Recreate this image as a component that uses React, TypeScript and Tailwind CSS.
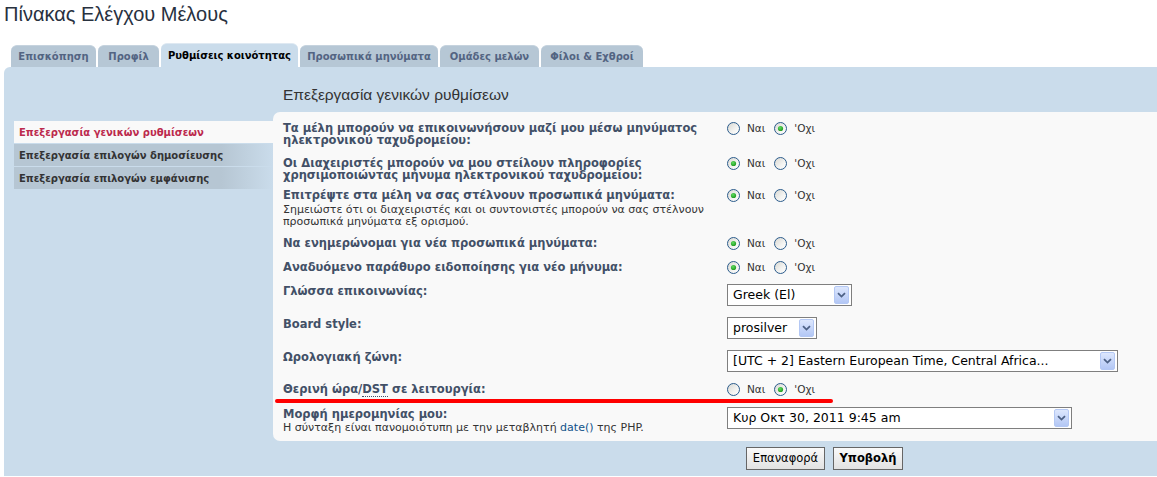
import React from "react";

const tabs = [
  { label: "Επισκόπηση", w: "w-[85px]" },
  { label: "Προφίλ", w: "w-[61px]" },
  { label: "Ρυθμίσεις κοινότητας", w: "w-[137px]", active: true },
  { label: "Προσωπικά μηνύματα", w: "w-[138px]" },
  { label: "Ομάδες μελών", w: "w-[99px]" },
  { label: "Φίλοι & Εχθροί", w: "w-[102px]" },
];

const menu = [
  { label: "Επεξεργασία γενικών ρυθμίσεων", active: true },
  { label: "Επεξεργασία επιλογών δημοσίευσης" },
  { label: "Επεξεργασία επιλογών εμφάνισης" },
];

const Radio = ({ checked }: { checked?: boolean }) => (
  <svg width="13" height="13" viewBox="0 0 13 13" className="block shrink-0">
    <defs>
      <linearGradient id="rbg" x1="0" y1="0" x2="1" y2="1">
        <stop offset="0" stopColor="#d6d6d0" />
        <stop offset="0.6" stopColor="#f4f4f2" />
        <stop offset="1" stopColor="#ffffff" />
      </linearGradient>
      <radialGradient id="rdot" cx="0.4" cy="0.35" r="0.7">
        <stop offset="0" stopColor="#5fdc5f" />
        <stop offset="1" stopColor="#1c961c" />
      </radialGradient>
    </defs>
    <circle cx="6.5" cy="6.5" r="6" fill="url(#rbg)" stroke="#2c5c8c" strokeWidth="1" />
    {checked && <circle cx="6.5" cy="6.5" r="2.6" fill="url(#rdot)" />}
  </svg>
);

const YesNo = ({ yes }: { yes: boolean }) => (
  <div className="flex h-[13px] items-center text-[10.5px] leading-[13px] text-[#333]">
    <Radio checked={yes} />
    <span className="ml-[7px]">Ναι</span>
    <span className="ml-[9px]">
      <Radio checked={!yes} />
    </span>
    <span className="ml-[7px]">'Οχι</span>
  </div>
);

const Select = ({ text, w }: { text: string; w: string }) => (
  <div
    className={`-mt-[1px] flex h-[22px] items-center justify-between border border-[#7f7f7f] bg-white pl-[5px] pr-[2px] text-[12.5px] leading-[20px] text-black ${w}`}
  >
    <span className="whitespace-nowrap">{text}</span>
    <span className="flex h-[18px] w-[15px] shrink-0 items-center justify-center rounded-[2px] border border-[#b4c8f4] bg-linear-to-b from-[#dde7fd] to-[#b3c7f5]">
      <svg width="9" height="6" viewBox="0 0 9 6">
        <path d="M1 1.2 L4.5 4.6 L8 1.2" fill="none" stroke="#4d6185" strokeWidth="1.8" />
      </svg>
    </span>
  </div>
);

const Label = ({ children }: { children: React.ReactNode }) => (
  <div className="text-[11.5px] font-bold leading-[12px] text-[#425067]">{children}</div>
);

const Desc = ({ children }: { children: React.ReactNode }) => (
  <div className="text-[11px] leading-[12px] text-[#333]">{children}</div>
);

export default function App() {
  return (
    <div className="h-[477px] w-[1157px] overflow-hidden bg-white font-['DejaVu_Sans',Verdana,sans-serif] text-[#333]">
      <h1 className="h-[28px] pl-[4px] font-['Liberation_Sans',Arial,sans-serif] text-[20px] font-normal leading-[28px] text-[#28313f]">
        Πίνακας Ελέγχου Μέλους
      </h1>

      {/* tabs */}
      <div className="flex h-[39px] items-end gap-[2px] pl-[11px]">
        {tabs.map((t) =>
          t.active ? (
            <div
              key={t.label}
              className={`flex h-[24px] items-center justify-center rounded-t-[6px] border-t border-[#dfe9f2] bg-[#cadceb] text-[10px] font-bold text-black ${t.w}`}
            >
              {t.label}
            </div>
          ) : (
            <div
              key={t.label}
              className={`flex h-[22px] items-center justify-center rounded-t-[6px] border-t border-[#c6d3de] bg-[#b6c7d5] text-[10px] font-bold text-[#536482] ${t.w}`}
            >
              {t.label}
            </div>
          )
        )}
      </div>

      {/* main panel */}
      <div className="ml-[4px] flex h-[409px] rounded-tl-[6px] bg-[#cadceb]">
        {/* left menu */}
        <div className="flex w-[269px] shrink-0 flex-col gap-[1px] pl-[10px] pt-[54px]">
          {menu.map((m) =>
            m.active ? (
              <div
                key={m.label}
                className="flex h-[22px] items-center bg-[#f9f9f9] pl-[5px] text-[10px] font-bold text-[#bc2a4d]"
              >
                {m.label}
              </div>
            ) : (
              <div
                key={m.label}
                className="flex h-[22px] items-center bg-linear-to-r from-[#b6c6d3] from-80% to-[#cadceb] pl-[5px] text-[10px] font-bold text-[#333]"
              >
                {m.label}
              </div>
            )
          )}
        </div>

        {/* content */}
        <div className="flex flex-1 flex-col">
          <h2 className="h-[45px] pl-[10px] pt-[16px] font-['Liberation_Sans',Arial,sans-serif] text-[15.5px] font-normal leading-[24px] text-[#333]">
            Επεξεργασία γενικών ρυθμίσεων
          </h2>

          <div className="flex flex-col rounded-l-[7px] bg-[#f9f9f9] pl-[10px] pt-[10px]">
            <div className="flex h-[35px] items-start">
              <div className="w-[444px] shrink-0">
                <Label>
                  Τα μέλη μπορούν να επικοινωνήσουν μαζί μου μέσω μηνύματος
                  <br />
                  ηλεκτρονικού ταχυδρομείου:
                </Label>
              </div>
              <YesNo yes={false} />
            </div>

            <div className="flex h-[32px] items-start">
              <div className="w-[444px] shrink-0">
                <Label>
                  Οι Διαχειριστές μπορούν να μου στείλουν πληροφορίες
                  <br />
                  χρησιμοποιώντας μήνυμα ηλεκτρονικού ταχυδρομείου:
                </Label>
              </div>
              <YesNo yes={true} />
            </div>

            <div className="flex h-[48px] items-start">
              <div className="w-[444px] shrink-0">
                <Label>Επιτρέψτε στα μέλη να σας στέλνουν προσωπικά μηνύματα:</Label>
                <div className="mt-[3px]">
                  <Desc>
                    Σημειώστε ότι οι διαχειριστές και οι συντονιστές μπορούν να σας στέλνουν
                    <br />
                    προσωπικά μηνύματα εξ ορισμού.
                  </Desc>
                </div>
              </div>
              <YesNo yes={true} />
            </div>

            <div className="flex h-[24px] items-start">
              <div className="w-[444px] shrink-0">
                <Label>Να ενημερώνομαι για νέα προσωπικά μηνύματα:</Label>
              </div>
              <YesNo yes={true} />
            </div>

            <div className="flex h-[24px] items-start">
              <div className="w-[444px] shrink-0">
                <Label>Αναδυόμενο παράθυρο ειδοποίησης για νέο μήνυμα:</Label>
              </div>
              <YesNo yes={true} />
            </div>

            <div className="flex h-[33px] items-start">
              <div className="w-[444px] shrink-0">
                <Label>Γλώσσα επικοινωνίας:</Label>
              </div>
              <Select text="Greek (El)" w="w-[125px]" />
            </div>

            <div className="flex h-[33px] items-start">
              <div className="w-[444px] shrink-0">
                <Label>Board style:</Label>
              </div>
              <Select text="prosilver" w="w-[90px]" />
            </div>

            <div className="flex h-[32px] items-start">
              <div className="w-[444px] shrink-0">
                <Label>Ωρολογιακή ζώνη:</Label>
              </div>
              <Select text="[UTC + 2] Eastern European Time, Central Africa..." w="w-[391px]" />
            </div>

            <div className="relative flex h-[25px] items-start">
              <div className="w-[444px] shrink-0">
                <Label>
                  Θερινή ώρα/
                  <abbr className="border-b border-dotted border-[#425067] no-underline">DST</abbr> σε
                  λειτουργία:
                </Label>
              </div>
              <YesNo yes={false} />
              <div className="absolute left-[-8px] top-[16px] h-[4px] w-[558px] rounded-full bg-[#f00]" />
            </div>

            <div className="flex h-[33px] items-start">
              <div className="w-[444px] shrink-0">
                <Label>Μορφή ημερομηνίας μου:</Label>
                <div className="mt-[2px]">
                  <Desc>
                    Η σύνταξη είναι πανομοιότυπη με την μεταβλητή{" "}
                    <span className="text-[#105289]">date()</span> της PHP.
                  </Desc>
                </div>
              </div>
              <Select text="Κυρ Οκτ 30, 2011 9:45 am" w="w-[345px]" />
            </div>
          </div>

          <div className="mt-[6px] flex gap-[8px] pl-[473px]">
            <button className="h-[23px] w-[79px] border border-[#666] bg-linear-to-b from-[#fafafa] to-[#e2e2e2] text-[11.5px] text-black">
              Επαναφορά
            </button>
            <button className="h-[23px] w-[70px] border border-[#666] bg-linear-to-b from-[#fafafa] to-[#e2e2e2] text-[11.5px] font-bold text-black">
              Υποβολή
            </button>
          </div>
        </div>
      </div>
    </div>
  );
}
